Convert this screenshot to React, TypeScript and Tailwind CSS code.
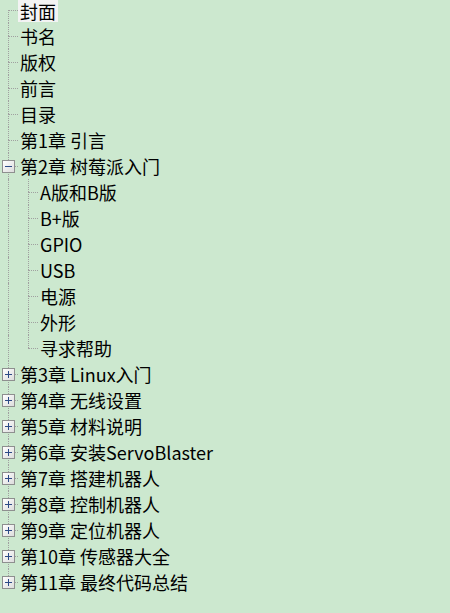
type Node = {
  label: string;
  selected?: boolean;
  state?: 'open' | 'closed';
  children?: Node[];
};

const tree: Node[] = [
  { label: '封面', selected: true },
  { label: '书名' },
  { label: '版权' },
  { label: '前言' },
  { label: '目录' },
  { label: '第1章 引言' },
  {
    label: '第2章 树莓派入门',
    state: 'open',
    children: [
      { label: 'A版和B版' },
      { label: 'B+版' },
      { label: 'GPIO' },
      { label: 'USB' },
      { label: '电源' },
      { label: '外形' },
      { label: '寻求帮助' },
    ],
  },
  { label: '第3章 Linux入门', state: 'closed' },
  { label: '第4章 无线设置', state: 'closed' },
  { label: '第5章 材料说明', state: 'closed' },
  { label: '第6章 安装ServoBlaster', state: 'closed' },
  { label: '第7章 搭建机器人', state: 'closed' },
  { label: '第8章 控制机器人', state: 'closed' },
  { label: '第9章 定位机器人', state: 'closed' },
  { label: '第10章 传感器大全', state: 'closed' },
  { label: '第11章 最终代码总结', state: 'closed' },
];

// expand / collapse box drawn over the dotted lines
const Toggle = ({ open }: { open: boolean }) => (
  <div className="[grid-area:1/1] self-center ml-[2px] w-[13px] h-[13px] border border-[#8e8f8f] bg-gradient-to-br from-white to-[#dcdcdc] grid place-items-center">
    <svg width="7" height="7" viewBox="0 0 7 7" shapeRendering="crispEdges">
      <rect x="0" y="3" width="7" height="1" fill="#2c4a86" />
      {!open && <rect x="3" y="0" width="1" height="7" fill="#2c4a86" />}
    </svg>
  </div>
);

const Connector = ({ first, last, box }: { first?: boolean; last?: boolean; box?: 'open' | 'closed' }) => (
  <div className="grid w-[18px] h-full shrink-0">
    <div className="[grid-area:1/1] flex flex-col pl-[8px]">
      <div className={first ? 'h-[10px]' : 'h-[13px] border-l border-dotted border-[#a0a0a0]'} />
      <div
        className={`flex-1 border-t border-dotted border-[#a0a0a0] ${last ? '' : 'border-l'}`}
      />
    </div>
    {box && <Toggle open={box === 'open'} />}
  </div>
);

const Pass = () => (
  <div className="w-[20px] h-full shrink-0 pl-[8px]">
    <div className="h-full border-l border-dotted border-[#a0a0a0]" />
  </div>
);

const Label = ({ node, first }: { node: Node; first?: boolean }) => (
  <span
    className={`flex items-center px-[2px] whitespace-nowrap ${first ? 'h-[22px]' : 'h-[25px]'} ${node.selected ? 'bg-[#f3f3f3]' : ''}`}
  >
    {node.label}
  </span>
);

export default function App() {
  const rows: React.ReactNode[] = [];
  tree.forEach((node, i) => {
    rows.push(
      <div key={node.label} className={`flex items-start ${i === 0 ? 'h-[23px]' : 'h-[26px]'}`}>
        <Connector first={i === 0} last={i === tree.length - 1} box={node.state} />
        <Label node={node} first={i === 0} />
      </div>
    );
    if (node.state === 'open' && node.children) {
      node.children.forEach((child, j) => {
        rows.push(
          <div key={child.label} className="flex h-[26px] items-start">
            <Pass />
            <Connector last={j === node.children!.length - 1} />
            <Label node={child} />
          </div>
        );
      });
    }
  });

  return (
    <div
      className="w-[450px] h-[613px] overflow-hidden bg-[#cce8cf] text-[18px] leading-none text-black"
      style={{ fontFamily: '"Noto Sans CJK SC", "Noto Sans", sans-serif' }}
    >
      <div className="flex flex-col">{rows}</div>
    </div>
  );
}
